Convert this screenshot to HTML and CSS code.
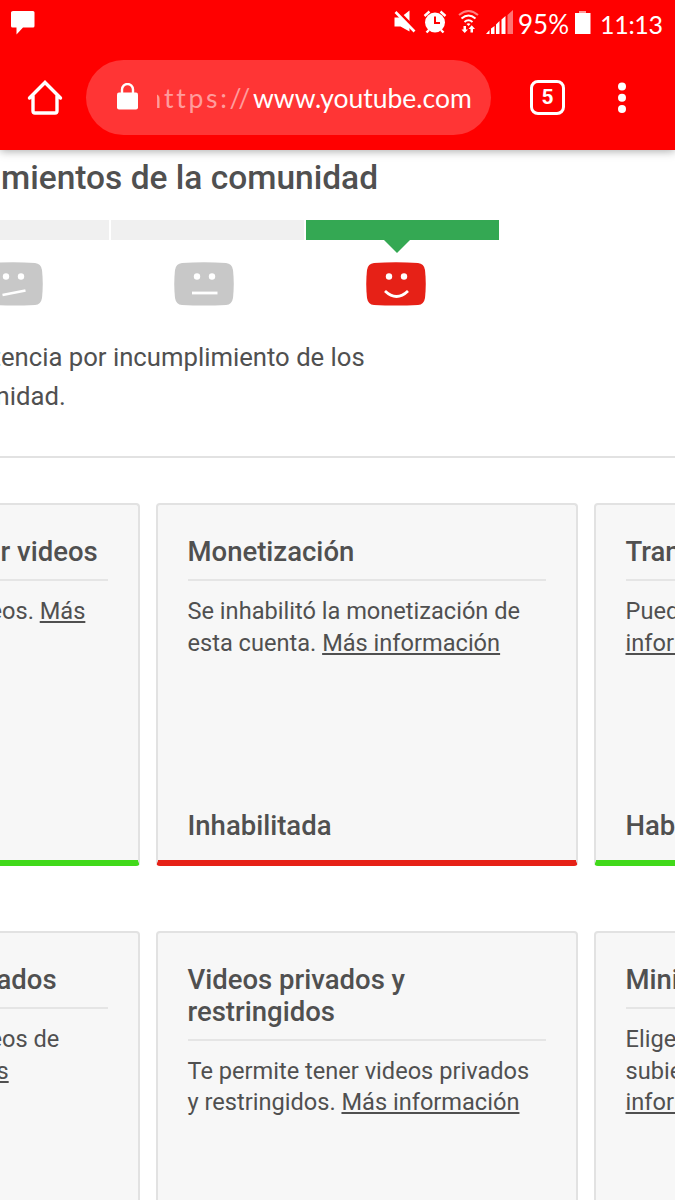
FILE: index.html
```html
<!DOCTYPE html>
<html lang="es">
<head>
    <meta charset="UTF-8">
    <meta name="viewport" content="width=device-width, initial-scale=1.0">
    <title>YouTube</title>
    <link rel="stylesheet" href="styles.css">
</head>
<body>
    <header class="browser">
        <!-- Status bar -->
        <div class="status-bar">
            <svg class="message-icon" width="24" height="24" viewBox="0 0 24 24"><path d="M2 0h20q1.500 0 1.500 1.500V15q0 1.500-1.500 1.500H12L5.500 23.500V16.500H1.500Q0 16.500 0 15V1.500Q0 0 2 0z" fill="#fff"/></svg>
            <svg class="status-icons" width="140" height="30" viewBox="0 0 140 30">
                <!-- muted -->
                <path d="M4.500 8.500h6l9-7v21l-9-5h-6z" fill="#fff"/>
                <path d="M6.500 1L26 20.500" stroke="red" stroke-width="3"/>
                <path d="M5.500 3L24.500 22.500" stroke="#fff" stroke-width="2.600"/>
                <!-- alarm -->
                <circle cx="45" cy="13.500" r="10" fill="#fff"/>
                <path d="M34.500 7l5-4.500M55.500 7l-5-4.500M39 21l-2.500 2.500M51 21l2.500 2.500" stroke="#fff" stroke-width="2.400"/>
                <path d="M45 7.500V14h5" fill="none" stroke="red" stroke-width="2"/>
                <!-- wifi -->
                <g fill="none" stroke="#fff" stroke-width="2">
                    <path d="M69 6q9.500-8 19 0" opacity=".5"/>
                    <path d="M71.500 9.500q7-6 14 0M74.500 13q4-3.500 8 0"/>
                </g>
                <path d="M76.500 15l2 2 2-2q-2-1.500-4 0z" fill="#fff"/>
                <path d="M73.500 17h2.500v3.500h2L74.700 24l-3.200-3.500h2zM80.500 23.500H83V20h2l-3.300-3.800L78.500 20h2z" fill="#fff"/>
                <!-- signal -->
                <path d="M96 25l3.500-4v4zM101 19.500l3.500-2.500v8H101zM106 15.500l3.500-3.500v13H106zM111.500 10.500l4-3.500V25h-4z" fill="#fff"/>
                <path d="M117.500 6l5.500-5v24h-5.500z" fill="#fff" opacity=".45"/>
            </svg>
            <span class="battery-level">95%</span>
            <svg class="battery-icon" width="16" height="24" viewBox="0 0 16 24"><path d="M4 0h7v2H4z" fill="#fff" opacity=".6"/><path d="M0 2h15.500v21H0z" fill="#fff"/></svg>
            <span class="clock">11:13</span>
        </div>

        <!-- Address bar -->
        <div class="toolbar">
            <svg class="home-icon" width="36" height="36" viewBox="0 0 36 36"><path d="M2.500 18L18 2.500 33.500 18M6 15.500V31q0 2 2 2h20q2 0 2-2V15.500" fill="none" stroke="#fff" stroke-width="3.400" stroke-linecap="round"/></svg>
            <div class="url-box">
                <svg class="lock-icon" width="21" height="27" viewBox="0 0 21 27"><path d="M5 11V6.500a5.500 5.500 0 0 1 11 0V11" fill="none" stroke="#fff" stroke-width="2.400"/><rect y="9.500" width="21" height="17" rx="2" fill="#fff"/></svg>
                <div class="url"><span class="scheme"><span class="scheme-cut">h</span>ttps://</span><span class="host">www.youtube.com</span></div>
            </div>
            <div class="tab-count">5</div>
            <svg class="menu-icon" width="10" height="32" viewBox="0 0 10 32"><g fill="#fff"><circle cx="5" cy="4.500" r="4"/><circle cx="5" cy="15.800" r="4"/><circle cx="5" cy="27" r="4"/></g></svg>
        </div>
    </header>

    <main class="page">
        <section class="standing">
            <h1>mientos de la comunidad</h1>
            <div class="meter">
                <div class="segment"></div>
                <div class="segment"></div>
                <div class="segment good"></div>
            </div>
            <div class="faces">
                <svg class="face" width="60" height="44" viewBox="0 0 60 44">
                    <path d="M8 1Q30-.5 52 1q6 .5 7 7 1.500 14 0 28-1 6.500-7 7-22 1-44 0-6-.5-7-7-1.500-14 0-28 1-6.500 7-7z" fill="#c8c8c8"/>
                    <circle cx="23" cy="14.500" r="3.200" fill="#fff"/><circle cx="38" cy="14.500" r="3.200" fill="#fff"/>
                    <path d="M19.500 33l23-4.500" stroke="#fff" stroke-width="2.800"/>
                </svg>
                <svg class="face" width="60" height="44" viewBox="0 0 60 44">
                    <path d="M8 1Q30-.5 52 1q6 .5 7 7 1.500 14 0 28-1 6.500-7 7-22 1-44 0-6-.5-7-7-1.500-14 0-28 1-6.500 7-7z" fill="#c8c8c8"/>
                    <circle cx="23" cy="14.500" r="3.200" fill="#fff"/><circle cx="38" cy="14.500" r="3.200" fill="#fff"/>
                    <path d="M18 31h25.500" stroke="#fff" stroke-width="2.800"/>
                </svg>
                <svg class="face" width="60" height="44" viewBox="0 0 60 44">
                    <path d="M8 1Q30-.5 52 1q6 .5 7 7 1.500 14 0 28-1 6.500-7 7-22 1-44 0-6-.5-7-7-1.500-14 0-28 1-6.500 7-7z" fill="#e62117"/>
                    <circle cx="23" cy="14.500" r="3.200" fill="#fff"/><circle cx="38" cy="14.500" r="3.200" fill="#fff"/>
                    <path d="M19 29q11.500 11 23 0" fill="none" stroke="#fff" stroke-width="2.800"/>
                </svg>
            </div>
            <p class="notice"><span class="notice-first">tencia por incumplimiento de los</span><br><span class="notice-second">nidad.</span></p>
        </section>

        <section class="cards">
            <article class="card enabled left">
                <h2>r videos</h2>
                <p><span class="cut-e">eos. <a>Más</a></span></p>
            </article>
            <article class="card disabled">
                <h2>Monetización</h2>
                <p>Se inhabilitó la monetización de<br>esta cuenta. <a>Más información</a></p>
                <div class="state">Inhabilitada</div>
            </article>
            <article class="card enabled">
                <h2>Tran</h2>
                <p>Puede<br><a>inform</a></p>
                <div class="state">Habi</div>
            </article>

            <article class="card left">
                <h2 class="cut-a">ados</h2>
                <p><span class="cut-e">eos de</span><br><a class="cut-s">s</a></p>
            </article>
            <article class="card">
                <h2>Videos privados y<br>restringidos</h2>
                <p>Te permite tener videos privados<br>y restringidos. <a>Más información</a></p>
            </article>
            <article class="card">
                <h2>Minia</h2>
                <p>Elige<br>subie<br><a>inform</a></p>
            </article>
        </section>
    </main>
</body>
</html>
```
FILE: styles.css
```css
* {
    box-sizing: border-box;
}

body {
    margin: 0;
    width: 675px;
    height: 1200px;
    overflow: hidden;
    background: #fff;
    color: #505050;
    font-family: Roboto, sans-serif;
    white-space: nowrap;
}

svg {
    display: block;
    flex: none;
}

/* Browser chrome */
.browser {
    position: relative;
    height: 150px;
    background: #f00;
    color: #fff;
    box-shadow: 0 1px 9px rgba(0, 0, 0, 0.35);
    font-family: Lato, sans-serif;
}

.status-bar {
    display: flex;
    align-items: flex-start;
    height: 60px;
    padding-top: 9px;
    padding-left: 11px;
}

.message-icon {
    margin-top: 2px;
}

.status-icons {
    margin-left: 355px;
}

.battery-level {
    width: 57px;
    margin-left: -12px;
    font-size: 26px;
    line-height: 30px;
}

.battery-icon {
    margin-top: 2px;
}

.clock {
    margin-left: 9px;
    font-size: 25px;
    line-height: 30px;
    letter-spacing: -0.3px;
}

.toolbar {
    display: flex;
    align-items: center;
    height: 75px;
    padding-left: 27px;
}

.url-box {
    display: flex;
    align-items: center;
    width: 405px;
    height: 75px;
    margin-left: 23px;
    padding-left: 31px;
    border-radius: 38px;
    background: #ff3535;
}

.lock-icon {
    margin-top: -2px;
}

.url {
    display: flex;
    margin-left: 19px;
    font-size: 26.5px;
    line-height: 40px;
}

.scheme {
    display: flex;
    width: 96px;
    color: #ff9c9c;
    letter-spacing: 2.7px;
}

.scheme-cut {
    display: flex;
    justify-content: flex-end;
    width: 7px;
    overflow: hidden;
}

.tab-count {
    width: 35px;
    height: 35px;
    margin-left: 39px;
    border: 3.5px solid #fff;
    border-radius: 8px;
    font: bold 21px/28px Roboto, sans-serif;
    text-align: center;
}

.menu-icon {
    margin-left: 52px;
}

/* Community standing */
.page {
    overflow: hidden;
    height: 1050px;
}

.standing {
    height: 308px;
    padding-top: 8px;
    border-bottom: 2px solid #e2e2e2;
}

h1 {
    margin: 0 0 0 1px;
    font-size: 33.5px;
    font-weight: 500;
    line-height: 40px;
}

.meter {
    display: flex;
    gap: 2px;
    margin: 22px 0 0 -84.5px;
}

.segment {
    flex: none;
    width: 193px;
    height: 20px;
    background: #f0f0f0;
}

.segment.good {
    position: relative;
    background: #34a853;
}

.segment.good::after {
    content: "";
    position: absolute;
    top: 19px;
    left: 77px;
    border: 14px solid transparent;
    border-top-color: #34a853;
    border-bottom: 0;
}

.faces {
    display: flex;
    gap: 131.5px;
    margin: 22px 0 0 -17.5px;
}

.face {
    flex: none;
}

.notice {
    margin: 32px 0 0;
    font-size: 25.7px;
    line-height: 39px;
}

.notice-first {
    margin-left: -7.5px;
}

.notice-second {
    margin-left: -4.5px;
}

/* Feature cards */
.cards {
    display: grid;
    grid-template-columns: 140px 422px 422px;
    grid-auto-rows: 363px;
    gap: 65px 16px;
    margin-top: 45px;
    margin-left: -0.5px;
}

.card {
    display: flex;
    flex-direction: column;
    padding: 31px 30px 18px;
    border: 2px solid #e2e2e2;
    border-radius: 4px;
    background: #f7f7f7;
}

.card.left {
    padding-left: 0;
    border-left: 0;
    border-top-left-radius: 0;
    border-bottom-left-radius: 0;
}

.card.enabled {
    border-bottom: 6px solid #41d91a;
}

.card.disabled {
    border-bottom: 6px solid #e62117;
}

.card h2 {
    margin: 0;
    padding-bottom: 11px;
    border-bottom: 2px solid #e5e5e5;
    font-size: 27.5px;
    font-weight: 500;
    line-height: 31.8px;
}

.card p {
    margin: 15px 0 0;
    font-size: 23.6px;
    line-height: 31.8px;
}

.card a {
    text-decoration: underline;
}

.card .cut-e {
    margin-left: -10px;
}

.card .cut-a {
    text-indent: -3px;
}

.card .cut-s {
    margin-left: -3px;
}

.left h2 {
    text-indent: 1px;
}

.state {
    margin-top: auto;
    font-size: 27.5px;
    font-weight: 500;
    line-height: 32px;
}
```
